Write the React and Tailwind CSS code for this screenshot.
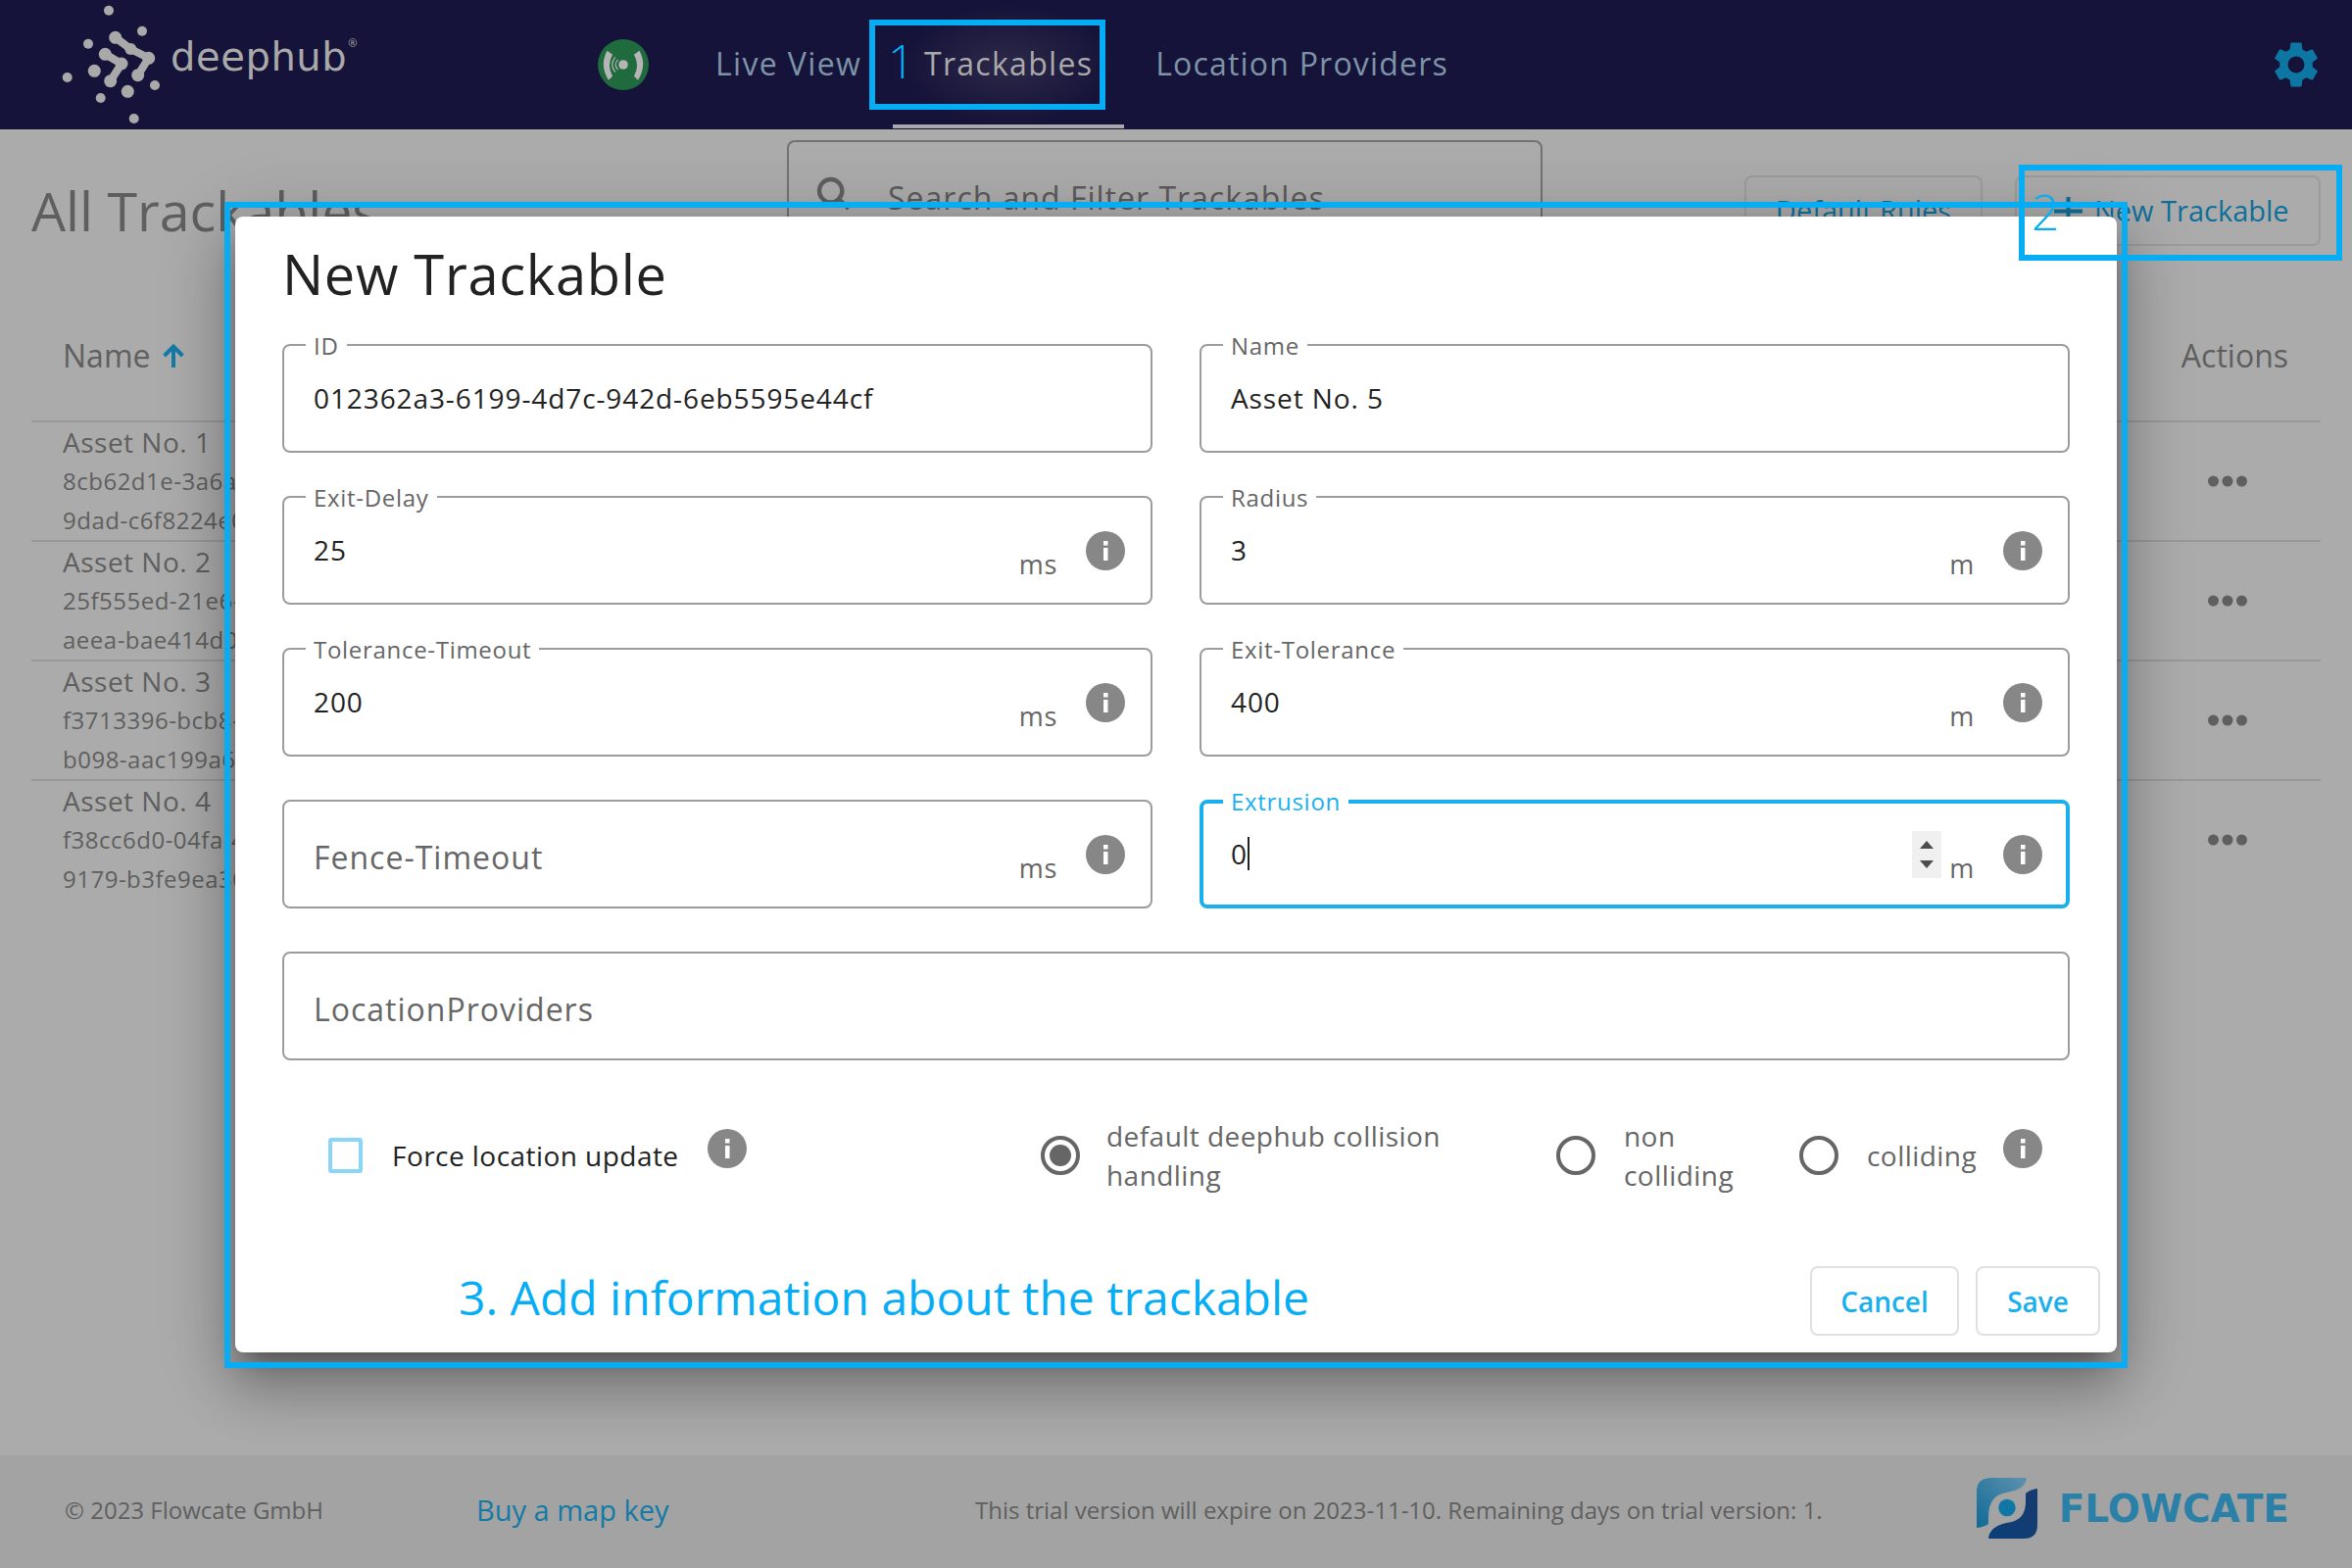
const font = { fontFamily: '"Open Sans", sans-serif' };

const rows = [
  { name: "Asset No. 1", a: "8cb62d1e-3a6a", b: "9dad-c6f8224e0" },
  { name: "Asset No. 2", a: "25f555ed-21e6-", b: "aeea-bae414d0" },
  { name: "Asset No. 3", a: "f3713396-bcb8-", b: "b098-aac199a6" },
  { name: "Asset No. 4", a: "f38cc6d0-04fa-4", b: "9179-b3fe9ea30" },
];

const InfoIcon = ({ className = "" }) => (
  <svg viewBox="0 0 40 40" className={`h-10 w-10 shrink-0 ${className}`}>
    <circle cx="20" cy="20" r="20" fill="#878787" />
    <rect x="18" y="10" width="4.5" height="4.5" fill="#fff" />
    <rect x="18" y="17" width="4.5" height="13" fill="#fff" />
  </svg>
);

const DeephubMark = () => (
  <svg viewBox="60 1 110 130" className="h-[130px] w-[110px] shrink-0">
    <g fill="#a9a9a9">
      <circle cx="111" cy="10.7" r="5" />
      <circle cx="145" cy="31.7" r="5" />
      <circle cx="90" cy="44.7" r="5" />
      <circle cx="68.7" cy="79" r="5" />
      <circle cx="96.3" cy="72.3" r="6.5" />
      <circle cx="158" cy="87" r="5" />
      <circle cx="130.3" cy="93.3" r="6.5" />
      <circle cx="102.7" cy="100" r="5" />
      <circle cx="136.7" cy="121" r="5" />
      <circle cx="117.7" cy="38.3" r="6.5" />
      <circle cx="133.3" cy="50" r="6" />
      <circle cx="151.7" cy="59.3" r="6.5" />
      <circle cx="140.7" cy="76.7" r="6.5" />
      <circle cx="107.3" cy="55.3" r="6.5" />
      <circle cx="124" cy="65" r="6.5" />
      <circle cx="112.7" cy="82.7" r="6.5" />
    </g>
    <g fill="none" stroke="#a9a9a9" strokeWidth="8" strokeLinecap="round" strokeLinejoin="round">
      <path d="M117.7 38.3 L133.3 50 L151.7 59.3 L140.7 76.7" />
      <path d="M107.3 55.3 L124 65 L112.7 82.7" />
    </g>
  </svg>
);

const FlowcateMark = () => (
  <svg viewBox="0 0 62 62" className="h-[62px] w-[62px] shrink-0">
    <defs>
      <linearGradient id="flowTl" x1="1" y1="0" x2="0" y2="1">
        <stop offset="0" stopColor="#5f92ae" />
        <stop offset="1" stopColor="#0f6a97" />
      </linearGradient>
      <linearGradient id="flowBr" x1="1" y1="0" x2="0" y2="1">
        <stop offset="0" stopColor="#163a6e" />
        <stop offset="1" stopColor="#0c3f78" />
      </linearGradient>
    </defs>
    <path d="M0 51 V14 Q0 0 15 0 H51 Q50 12 30 15 Q12 18 12 40 V47 Q8 50 0 51 Z" fill="url(#flowTl)" />
    <path d="M62 11 V48 Q62 62 48 62 H12 Q13 50 30 46 Q50 44 50 25 V16 Q54 12 62 11 Z" fill="url(#flowBr)" />
    <circle cx="31" cy="30.5" r="8.7" fill="#0f76a5" />
  </svg>
);

const Field = ({ label, value, unit, placeholder, focused, full }) => (
  <div
    className={`relative flex h-[111px] items-center rounded-lg bg-white ${
      focused ? "border-[4px] border-[#1ab0ee] pl-[28px]" : "border-2 border-[#9c9c9c] pl-[30px]"
    } ${full ? "col-span-2" : ""}`}
  >
    {label && (
      <span
        className={`absolute bg-white px-[8px] text-[24px] leading-[30px] tracking-[0.7px] ${
          focused ? "left-[20px] top-[-17px] text-[#1ab0ee]" : "left-[22px] top-[-15px] text-[#666666]"
        }`}
      >
        {label}
      </span>
    )}
    {placeholder ? (
      <span className="mt-[6px] flex-1 text-[32px] tracking-[1px] text-[#666666]">{placeholder}</span>
    ) : (
      <span className="mt-[-1px] flex flex-1 items-center text-[28px] tracking-[0.9px] text-[#222222]">
        {value}
        {focused && <span className="h-[34px] w-[2px] bg-[#222222]" />}
      </span>
    )}
    {focused && (
      <div className="mr-[8px] flex h-[48px] w-[30px] flex-col items-center justify-around bg-[#f0f0f0] py-[4px]">
        <svg viewBox="0 0 14 8" className="h-[8px] w-[14px]"><path d="M7 0 L14 8 H0 Z" fill="#4d4d4d" /></svg>
        <svg viewBox="0 0 14 8" className="h-[8px] w-[14px]"><path d="M7 8 L14 0 H0 Z" fill="#4d4d4d" /></svg>
      </div>
    )}
    {unit && <span className="mr-[29px] mt-[29px] text-[27px] leading-[30px] tracking-[0.7px] text-[#666666]">{unit}</span>}
    {unit && <InfoIcon className={focused ? "mr-[24px]" : "mr-[26px]"} />}
  </div>
);

const Radio = ({ checked }) => (
  <span className="flex h-10 w-10 shrink-0 items-center justify-center rounded-full border-[4px] border-[#666666]">
    {checked && <span className="h-[22px] w-[22px] rounded-full bg-[#666666]" />}
  </span>
);

const App = () => {
  return (
    <div style={font} className="relative flex h-[1600px] w-[2400px] flex-col overflow-hidden bg-[#ababab]">
      {/* Top bar */}
      <header className="flex h-[132px] shrink-0 items-center bg-[#16133a]">
        <div className="ml-[60px] flex w-[520px] items-center">
          <DeephubMark />
          <span style={{ fontFamily: '"DejaVu Sans", sans-serif' }} className="ml-[4px] mt-[-17px] text-[40px] leading-none tracking-[0.6px] text-[#a9a9a9]">
            deephub
          </span>
          <span className="mb-[46px] ml-[1px] text-[11px] leading-none text-[#a9a9a9]">®</span>
        </div>
        <div className="ml-[30px] h-[52px] w-[52px] rounded-full bg-[#1f6b3e]">
          <svg viewBox="32 44 152 152" className="h-[52px] w-[52px]" fill="#b5b5b5">
            <circle cx="108" cy="120" r="14" />
            <path d="M60 78 Q36 120 64 166 L76 154 Q58 122 76 90 Z" />
            <path d="M156 78 Q180 120 152 166 L140 154 Q158 122 140 90 Z" />
            <path d="M84 98 Q66 120 84 142" fill="none" stroke="#b5b5b5" strokeWidth="3.5" />
            <path d="M92 105 Q78 120 92 135" fill="none" stroke="#b5b5b5" strokeWidth="3.5" />
          </svg>
        </div>
        <span className="ml-[68px] pb-[3px] text-[32px] tracking-[1.35px] text-[#7d93a6]">Live View</span>
        <div className="relative ml-[32px] flex h-[132px] w-[236px] items-center justify-center bg-[radial-gradient(ellipse_at_center,#2c2848_0%,#16133a_65%)]">
          <span className="pb-[3px] text-[32px] tracking-[1.3px] text-[#a9a9a9]">Trackables</span>
          <span className="absolute bottom-[1px] left-0 h-[4px] w-full bg-[#a9a9a9]" />
        </div>
        <span className="ml-[32px] pb-[3px] text-[32px] tracking-[1.2px] text-[#7d93a6]">Location Providers</span>
        <svg viewBox="0 0 24 24" className="ml-auto mr-[29px] h-[56px] w-[56px]" fill="#0e76a3">
          <path d="M19.14 12.94c.04-.3.06-.61.06-.94 0-.32-.02-.64-.07-.94l2.03-1.58a.49.49 0 0 0 .12-.61l-1.92-3.32a.488.488 0 0 0-.59-.22l-2.39.96c-.5-.38-1.03-.7-1.62-.94l-.36-2.54a.484.484 0 0 0-.48-.41h-3.84c-.24 0-.43.17-.47.41l-.36 2.54c-.59.24-1.13.57-1.62.94l-2.39-.96c-.22-.08-.47 0-.59.22L2.74 8.87c-.12.21-.08.47.12.61l2.03 1.58c-.05.3-.09.63-.09.94s.02.64.07.94l-2.03 1.58a.49.49 0 0 0-.12.61l1.92 3.32c.12.22.37.29.59.22l2.39-.96c.5.38 1.03.7 1.62.94l.36 2.54c.05.24.24.41.48.41h3.84c.24 0 .44-.17.47-.41l.36-2.54c.59-.24 1.13-.56 1.62-.94l2.39.96c.22.08.47 0 .59-.22l1.92-3.32c.12-.22.07-.47-.12-.61l-2.01-1.58zM12 15.6c-1.98 0-3.6-1.62-3.6-3.6s1.62-3.6 3.6-3.6 3.6 1.62 3.6 3.6-1.62 3.6-3.6 3.6z" />
        </svg>
      </header>

      {/* Page behind the dialog */}
      <main className="flex-1 px-[32px]">
        <div className="flex h-[168px] items-start">
          <h1 className="mt-[38px] w-[771px] text-[55.5px] leading-[90px] text-[#5f5f5f]">All Trackables</h1>
          <div className="mt-[11px] flex h-[120px] w-[771px] items-start rounded-lg border-2 border-[#727272] pl-[26px] pt-[33px]">
            <svg viewBox="0 0 24 24" className="h-[40px] w-[40px] shrink-0" fill="none" stroke="#5f5f5f" strokeWidth="2.6">
              <circle cx="10" cy="10" r="7" />
              <path d="M15 15 L21 21" />
            </svg>
            <span className="ml-[35px] text-[32px] tracking-[1px] text-[#5a5a5a]">Search and Filter Trackables</span>
          </div>
          <div className="mt-[47px] ml-[206px] flex h-[72px] w-[243px] items-center justify-center rounded-lg border-2 border-[#9c9c9c] text-[29px] text-[#0f6f9a]">
            Default Rules
          </div>
          <div className="mt-[47px] ml-[33px] flex h-[72px] w-[312px] items-center gap-[12px] rounded-lg border-2 border-[#9c9c9c] pl-[38px] text-[29px] text-[#0f6f9a]">
            <svg viewBox="0 0 29 29" className="h-[29px] w-[29px] shrink-0" stroke="#0f6f9a" strokeWidth="4">
              <path d="M0 14.5 H29 M14.5 0 V29" />
            </svg>
            New Trackable
          </div>
        </div>

        <div className="flex h-[129px] items-center justify-between px-[32px] pb-[4px] text-[32px] text-[#5f5f5f]">
          <span className="flex items-center">
            Name
            <svg viewBox="0 0 24 24" className="ml-[8px] h-[32px] w-[32px]" fill="none" stroke="#137aa6" strokeWidth="3">
              <path d="M12 21 V5 M5 12 L12 5 L19 12" />
            </svg>
          </span>
          <span className="mr-[1px]">Actions</span>
        </div>

        <div className="w-[2336px]">
          {rows.map((row) => (
            <div key={row.name} className="flex h-[122px] items-center justify-between border-t-2 border-[#989898] pl-[32px] pr-[75px]">
              <div className="text-[#5f5f5f]">
                <div className="text-[28px] leading-[40px] tracking-[0.5px]">{row.name}</div>
                <div className="text-[24px] leading-[40px] tracking-[0.5px]">{row.a}</div>
                <div className="text-[24px] leading-[40px] tracking-[0.5px]">{row.b}</div>
              </div>
              <svg viewBox="0 0 40 12" className="h-[12px] w-[40px]" fill="#5f5f5f">
                <circle cx="5.5" cy="6" r="5.5" />
                <circle cx="20" cy="6" r="5.5" />
                <circle cx="34.5" cy="6" r="5.5" />
              </svg>
            </div>
          ))}
        </div>
      </main>

      {/* Footer */}
      <footer className="relative flex h-[115px] shrink-0 items-center bg-[#a3a3a3] pb-[3px] pl-[66px] pr-[64px]">
        <span className="w-[420px] text-[24px] text-[#5f5f5f]">© 2023 Flowcate GmbH</span>
        <span className="w-[509px] text-[29px] text-[#137aa6]">Buy a map key</span>
        <span className="text-[24px] text-[#5f5f5f]">This trial version will expire on 2023-11-10. Remaining days on trial version: 1.</span>
        <div className="mb-[4px] ml-auto flex items-center gap-[22px]">
          <FlowcateMark />
          <span className="text-[39px] font-bold leading-none text-[#2b80a8]" style={{ fontFamily: '"DejaVu Sans", sans-serif' }}>
            FLOWCATE
          </span>
        </div>
      </footer>

      {/* Dialog */}
      <div className="absolute left-[240px] top-[221px] flex h-[1159px] w-[1920px] flex-col rounded-lg bg-white shadow-[0_16px_24px_-10px_rgba(0,0,0,0.35),0_36px_56px_4px_rgba(0,0,0,0.2),0_14px_70px_12px_rgba(0,0,0,0.18)]">
        <h2 className="h-[130px] pl-[48px] pt-[20px] text-[56px] leading-[76px] tracking-[0.7px] text-[#222222]">New Trackable</h2>
        <div className="grid grid-cols-2 gap-x-[48px] gap-y-[44px] px-[48px]">
          <Field label="ID" value="012362a3-6199-4d7c-942d-6eb5595e44cf" />
          <Field label="Name" value="Asset No. 5" />
          <Field label="Exit-Delay" value="25" unit="ms" />
          <Field label="Radius" value="3" unit="m" />
          <Field label="Tolerance-Timeout" value="200" unit="ms" />
          <Field label="Exit-Tolerance" value="400" unit="m" />
          <Field placeholder="Fence-Timeout" unit="ms" />
          <Field label="Extrusion" value="0" unit="m" focused />
          <Field placeholder="LocationProviders" full />
        </div>

        <div className="mt-[47px] flex h-[100px] items-center pl-[95px] text-[28px] tracking-[0.45px]">
          <span className="h-[36px] w-[35px] rounded-[3px] border-[4px] border-[#8ad6f7]" />
          <span className="ml-[30px] w-[322px] text-[#222222]">Force location update</span>
          <InfoIcon className="mt-[-15px]" />
          <div className="ml-[300px] flex items-center">
            <Radio checked />
            <span className="ml-[27px] w-[459px] leading-[40px] text-[#666666]">default deephub collision handling</span>
            <Radio />
            <span className="ml-[29px] w-[130px] leading-[40px] text-[#666666]">non colliding</span>
            <span className="ml-[49px] flex items-center">
              <Radio />
              <span className="ml-[29px] w-[139px] text-[#666666]">colliding</span>
            </span>
            <InfoIcon className="mt-[-15px]" />
          </div>
        </div>

        <div className="mt-auto flex justify-end gap-[17px] pb-[17px] pr-[17px]">
          <div className="flex h-[71px] w-[152px] items-center justify-center rounded-lg border-2 border-[#e0e0e0] text-[28px] font-semibold text-[#1ab0ee]">Cancel</div>
          <div className="flex h-[71px] w-[127px] items-center justify-center rounded-lg border-2 border-[#e0e0e0] text-[28px] font-semibold text-[#1ab0ee]">Save</div>
        </div>
      </div>

      {/* Annotation overlays */}
      <div className="absolute left-[887px] top-[20px] h-[92px] w-[241px] border-[6px] border-[#06adf5]" />
      <span className="absolute left-[906px] top-[27px] text-[48px] font-light leading-[70px] text-[#06adf5]">1</span>
      <div className="absolute left-[2060px] top-[168px] h-[98px] w-[330px] border-[6px] border-[#06adf5]" />
      <span className="absolute left-[2073px] top-[181px] text-[50px] font-light leading-[70px] text-[#06adf5]">2</span>
      <div className="absolute left-[229px] top-[206px] h-[1190px] w-[1942px] border-[6px] border-[#06adf5]" />
      <span className="absolute left-[468px] top-[1289px] text-[48px] leading-[70px] text-[#06adf5]">3. Add information about the trackable</span>
    </div>
  );
};

export default App;
